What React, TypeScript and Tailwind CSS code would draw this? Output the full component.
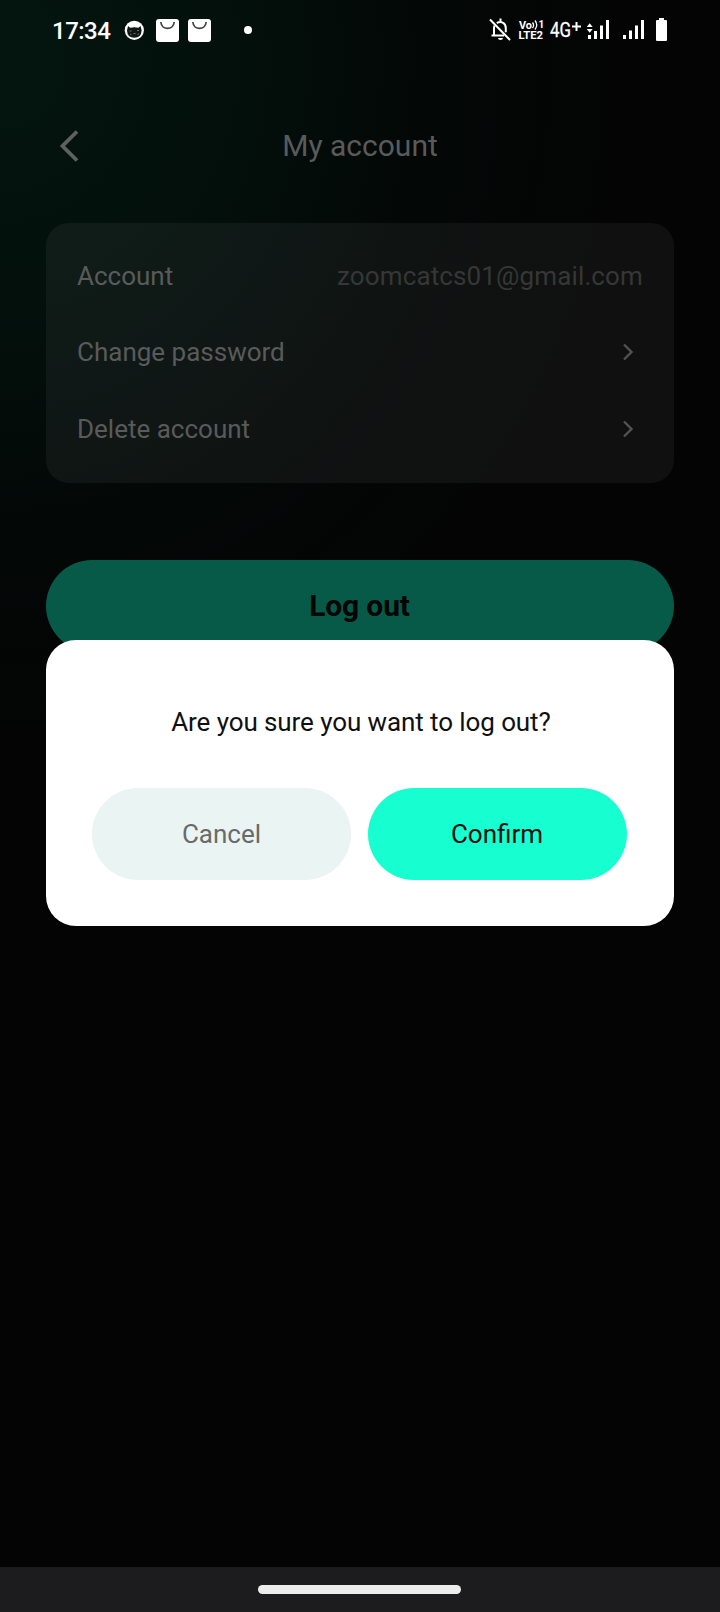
import React from "react";

function StatusBar() {
  return (
    <div className="flex h-[60px] items-center pl-[52px] pr-[53px] text-white">
      <span className="w-[72px] pt-px text-[24px] font-medium leading-none tracking-[-0.5px]">17:34</span>
      <svg className="h-[60px] w-[140px]" viewBox="124 0 140 60" fill="none">
        <circle cx="134.300" cy="30.300" r="9.600" fill="#fff" />
        <path d="M128 26l2.200 1.800q4.100-1 8.200 0l2.200-1.800 1 4.500q-.3 7.300-7.300 7.300t-7.300-7.300z" fill="#101816" />
        <path d="M129.500 31h2M137 30.500h2M130 34l1.500 .7M133.500 33.500h2M137.500 34.500l1.500-.7" stroke="#6b7270" strokeWidth="1" />
        <rect x="156" y="19" width="23" height="23" rx="3" fill="#fff" />
        <path d="M160.800 22c.8 8.500 12.600 8.500 13.400 0" stroke="#3c4442" strokeWidth="1.700" />
        <rect x="188" y="19" width="23" height="23" rx="3" fill="#fff" />
        <path d="M192.800 22c.8 8.500 12.600 8.500 13.400 0" stroke="#3c4442" strokeWidth="1.700" />
        <circle cx="248" cy="30" r="4" fill="#fff" />
      </svg>
      <div className="ml-auto flex items-center">
        <svg className="h-[60px] w-[179px]" viewBox="488 0 179 60" fill="#fff">
          <g fill="none" stroke="#fff" strokeWidth="2">
            <path d="M490 19.500l20 20.500" />
            <path d="M494.500 25.500q-.5 1.500-.5 3v7M491.500 35.500h12.500M496.800 23.200c3.700-2.500 9-.5 9 5v4M500.500 18.500v3.500" />
          </g>
          <path d="M498 38h5a2.500 2 0 0 1-5 0z" />
          <text x="519" y="29" fontSize="11" fontWeight="700" textLength="13" lengthAdjust="spacingAndGlyphs">Vo</text>
          <path d="M532.500 22.500q2.200 2.700 0 5.500M535 20.500q3.500 4.500 0 9" fill="none" stroke="#fff" strokeWidth="1.300" />
          <text x="538.500" y="28" fontSize="10" fontWeight="700">1</text>
          <text x="518.500" y="39" fontSize="10.500" fontWeight="700" textLength="24.500" lengthAdjust="spacingAndGlyphs">LTE2</text>
          <text x="550" y="37" fontSize="20" stroke="#fff" strokeWidth="0.300" textLength="21" lengthAdjust="spacingAndGlyphs">4G</text>
          <path d="M572 26.500h9M576.500 22v9" stroke="#fff" strokeWidth="2" />
          <path d="M586.700 27l3-3.700 3 3.700zM586.700 29l3 3.700 3-3.700z" />
          <path d="M588 35h3v4h-3zM594 31h3v8h-3zM600 25.500h3V39h-3zM606 20h3v19h-3z" />
          <path d="M623 35h3v4h-3zM629 30.500h3V39h-3zM635 25.500h3V39h-3zM641 20h3v19h-3z" />
          <path d="M659 18h5v2h2q1 0 1 1v19q0 1-1 1h-9q-1 0-1-1V21q0-1 1-1h2z" />
        </svg>
      </div>
    </div>
  );
}

function Chevron() {
  return (
    <svg className="mr-[8px] h-[20px] w-[14px]" viewBox="0 0 14 20" fill="none" stroke="#525252" strokeWidth="2.400">
      <path d="M3 2.500l7.500 7.500L3 17.500" />
    </svg>
  );
}

function Row({ label, children }: { label: string; children: React.ReactNode }) {
  return (
    <div className="flex h-[76px] items-center justify-between">
      <span className="text-[26px] leading-none text-[#595b5a]">{label}</span>
      {children}
    </div>
  );
}

export default function App() {
  return (
    <div className="relative flex h-[1612px] w-[720px] flex-col bg-[#040404] bg-[radial-gradient(ellipse_640px_700px_at_0px_60px,#04150f_0%,#03100c_35%,#030706_70%,#040404_100%)] font-[Roboto,sans-serif]">
      <StatusBar />
      <header className="relative mt-[46px] flex h-[80px] items-center justify-center">
        <svg className="absolute left-[56px] top-[22px] h-[36px] w-[26px]" viewBox="0 0 26 36" fill="none" stroke="#5f6060" strokeWidth="3.800">
          <path d="M21 3.500L6.500 18 21 32.500" />
        </svg>
        <h1 className="text-[30px] leading-none text-[#595b5a]">My account</h1>
      </header>
      <section className="mx-[46px] mt-[37px] flex h-[260px] flex-col rounded-[23px] bg-white/[0.047] px-[31px] pt-[15px]">
        <Row label="Account">
          <span className="text-[26px] leading-none tracking-[0.13px] text-[#363736]">zoomcatcs01@gmail.com</span>
        </Row>
        <Row label="Change password">
          <Chevron />
        </Row>
        <div className="h-px" />
        <Row label="Delete account">
          <Chevron />
        </Row>
      </section>
      <button className="mx-[46px] mt-[77px] h-[92px] rounded-full bg-[#075a48] pr-px text-[30px] font-bold leading-none tracking-[-0.15px] text-[#040605]">
        Log out
      </button>
      <div className="absolute left-[46px] top-[640px] flex h-[286px] w-[628px] flex-col rounded-[30px] bg-white px-[46px] pt-[64px]" role="dialog">
        <p className="h-[36px] pl-[2px] text-center text-[26px] leading-[36px] tracking-[-0.09px] text-[#101010]">Are you sure you want to log out?</p>
        <div className="mt-[48px] flex gap-[17px]">
          <button className="h-[92px] w-[259px] rounded-full bg-[#eaf4f2] text-[26px] text-[#6a6a6a]">Cancel</button>
          <button className="h-[92px] w-[259px] rounded-full bg-[#17ffd0] pr-px text-[26px] text-[#101010]">Confirm</button>
        </div>
      </div>
      <footer className="mt-auto flex h-[45px] justify-center bg-[#1c1c1e] pr-px pt-[18px]">
        <div className="h-[9px] w-[203px] rounded-full bg-[#ececec]" />
      </footer>
    </div>
  );
}
